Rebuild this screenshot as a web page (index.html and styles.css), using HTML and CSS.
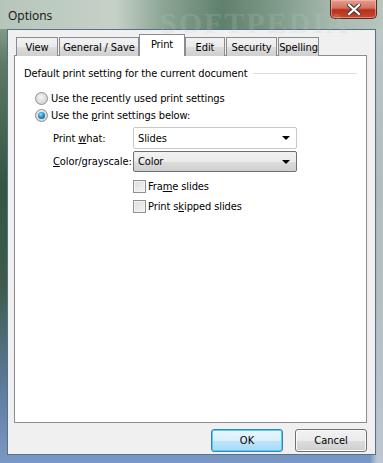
FILE: index.html
```html
<!DOCTYPE html>
<html lang="en">
  <head>
    <meta charset="UTF-8" />
    <title>Options</title>
    <link rel="stylesheet" href="styles.css">
  </head>
  <body>
    <div class="window">
      <div class="titlebar">
        <span class="title">Options</span>
        <span class="watermark">SOFTPEDIA</span>
        <button class="close">
          <svg width="14" height="11" viewBox="0 0 14 11">
            <path d="M2 1 L12 10 M12 1 L2 10" stroke="#3a3a3a" stroke-width="4.2" stroke-linecap="square" />
            <path d="M2 1 L12 10 M12 1 L2 10" stroke="#ffffff" stroke-width="2.2" stroke-linecap="square" />
          </svg>
        </button>
      </div>

      <div class="client">
        <div class="tabs">
          <div class="tab" style="width: 42px">View</div>
          <div class="tab" style="width: 80px">General / Save</div>
          <div class="tab active" style="width: 46px">Print</div>
          <div class="tab" style="width: 40px">Edit</div>
          <div class="tab" style="width: 51px">Security</div>
          <div class="tab" style="width: 41px">Spelling</div>
        </div>

        <div class="panel">
          <div class="group-head">
            <span>Default print setting for the current document</span>
            <span class="rule"></span>
          </div>

          <div class="radios">
            <label class="radio-row">
              <span class="radio"></span>
              <span>Use the <u>r</u>ecently used print settings</span>
            </label>
            <label class="radio-row">
              <span class="radio checked"></span>
              <span>Use the <u>p</u>rint settings below:</span>
            </label>
          </div>

          <div class="fields">
            <span class="field-label">Print <u>w</u>hat:</span>
            <div class="select"><span>Slides</span><span class="arrow"></span></div>
            <span class="field-label"><u>C</u>olor/grayscale:</span>
            <div class="select focused"><span>Color</span><span class="arrow"></span></div>
            <span></span>
            <div class="checks">
              <label class="check-row"><span class="check"></span><span>Fra<u>m</u>e slides</span></label>
              <label class="check-row"><span class="check"></span><span>Print s<u>k</u>ipped slides</span></label>
            </div>
          </div>
        </div>

        <div class="buttons">
          <button class="btn default">OK</button>
          <button class="btn">Cancel</button>
        </div>
      </div>
    </div>
  </body>
</html>
```

FILE: styles.css
```css
body {
  margin: 0;
  width: 383px;
  height: 463px;
  overflow: hidden;
  font-family: "DejaVu Sans Condensed", "Liberation Sans", sans-serif;
  font-size: 11px;
  letter-spacing: -0.1px;
  color: #000;
  background: #7896c4;
}

u {
  text-decoration: underline;
  text-underline-offset: 1px;
}

.window {
  display: flex;
  flex-direction: column;
  height: 463px;
  position: relative;
  background:
    linear-gradient(to right, rgba(190, 200, 205, 0) 370px, rgba(200, 208, 212, 0.85) 377px),
    linear-gradient(to bottom, #9fb3a5 0%, #5a7a64 14%, #345542 40%, #3d5c4c 62%, #5a7896 82%, #7a98c6 100%);
}

/* title bar */

.titlebar {
  height: 29px;
  display: flex;
  justify-content: space-between;
  align-items: flex-start;
  padding: 0 6px 0 8px;
  background: linear-gradient(to right, #b6c5ba 0%, #c6d1c8 30%, #8ea797 42%, #5f806c 58%, #7e9a89 72%, #a9bbb0 88%, #b8c6bd 100%);
}

.title {
  margin-top: 7px;
  font-family: "Open Sans", "Noto Sans", sans-serif;
  font-size: 12px;
  letter-spacing: 0;
  color: #111;
}

.watermark {
  position: absolute;
  left: 160px;
  top: 6px;
  font-family: "Liberation Serif", serif;
  font-size: 30px;
  font-weight: bold;
  letter-spacing: 2px;
  color: rgba(190, 205, 195, 0.2);
}

.close {
  width: 47px;
  height: 19px;
  margin: 0;
  padding: 0;
  border: 1px solid #5a2a22;
  border-top: none;
  border-radius: 0 0 5px 5px;
  background: linear-gradient(to bottom, #e4a090 0%, #d27060 45%, #b8301c 55%, #c84a2e 100%);
  box-shadow: inset 0 0 0 1px rgba(255, 200, 190, 0.5);
  display: flex;
  align-items: center;
  justify-content: center;
}

/* client area */

.client {
  flex: 1;
  margin: 0 7px 8px 7px;
  padding: 4px 8px 0 6px;
  background: #f0f0f0;
  border: 1px solid #5d6f86;
  display: flex;
  flex-direction: column;
}

.tabs {
  display: flex;
  align-items: flex-end;
  gap: 1px;
  padding-left: 2px;
  height: 22px;
  margin-bottom: -1px;
  position: relative;
  z-index: 1;
}

.tab {
  box-sizing: border-box;
  height: 19px;
  border: 1px solid #898c95;
  border-bottom: none;
  background: linear-gradient(to bottom, #f2f2f2 0%, #ebebeb 50%, #dddddd 51%, #cfcfcf 100%);
  text-align: center;
  line-height: 19px;
}

.tab.active {
  height: 22px;
  margin: 0 -1px;
  background: #fff;
  line-height: 19px;
}

.panel {
  box-sizing: border-box;
  height: 368px;
  border: 1px solid #898c95;
  background: #fff;
  padding: 11px 9px 0 9px;
}

.group-head {
  display: flex;
  align-items: center;
  line-height: 13px;
}

.rule {
  flex: 1;
  margin-left: 6px;
  height: 0;
  border-top: 1px solid #d5dfe5;
  border-bottom: 1px solid #fff;
}

.radios {
  margin-top: 10px;
  margin-left: 11px;
}

.radio-row {
  display: flex;
  align-items: center;
  height: 17px;
}

.radio {
  box-sizing: border-box;
  width: 13px;
  height: 13px;
  margin-right: 3px;
  border-radius: 50%;
  border: 1px solid #8e8f8f;
  background: radial-gradient(circle at 45% 40%, #f6f6f6 0%, #dcdcdc 55%, #c4c4c4 100%);
  position: relative;
}

.radio.checked::after {
  content: "";
  position: absolute;
  left: 2px;
  top: 2px;
  width: 7px;
  height: 7px;
  border-radius: 50%;
  background: radial-gradient(circle at 40% 35%, #8fe0ff 0%, #1c8ac8 50%, #0a4e80 100%);
}

.fields {
  display: grid;
  grid-template-columns: 80px 164px;
  grid-template-rows: 22px 21px auto;
  row-gap: 2px;
  align-items: center;
  margin-top: 3px;
  margin-left: 29px;
}

.select {
  box-sizing: border-box;
  height: 100%;
  display: flex;
  align-items: center;
  padding-left: 4px;
  border: 1px solid #c5c8cc;
  border-radius: 2px;
  background: #fff;
  position: relative;
}

.select.focused {
  border-color: #707070;
  background: linear-gradient(to bottom, #f2f2f2 0%, #ebebeb 50%, #dddddd 51%, #cfcfcf 100%);
}

.arrow {
  position: absolute;
  right: 6px;
  top: 50%;
  margin-top: -2px;
  border-left: 4px solid transparent;
  border-right: 4px solid transparent;
  border-top: 4px solid #000;
}

.checks {
  margin-top: 2px;
}

.check-row {
  display: flex;
  align-items: center;
  height: 20px;
}

.check {
  box-sizing: border-box;
  width: 13px;
  height: 13px;
  margin-right: 2px;
  border: 1px solid #8e8f8f;
  background: linear-gradient(135deg, #dcdcdc 0%, #f4f4f4 100%);
  box-shadow: inset 0 0 0 1px #f4f4f4;
}

/* buttons */

.buttons {
  display: flex;
  justify-content: flex-end;
  gap: 12px;
  margin-top: 6px;
}

.btn {
  width: 72px;
  height: 23px;
  font-family: inherit;
  font-size: 11px;
  letter-spacing: 0;
  color: #000;
  border: 1px solid #707070;
  border-radius: 3px;
  background: linear-gradient(to bottom, #f2f2f2 0%, #ebebeb 50%, #dddddd 51%, #cfcfcf 100%);
  box-shadow: inset 0 0 0 1px #fafafa;
}

.btn.default {
  border-color: #3c7fb1;
  box-shadow: inset 0 0 0 1px #48d4f6;
  background: linear-gradient(to bottom, #eaf6fd 0%, #d9f0fc 50%, #bee6fd 51%, #a7d9f5 100%);
}
```
